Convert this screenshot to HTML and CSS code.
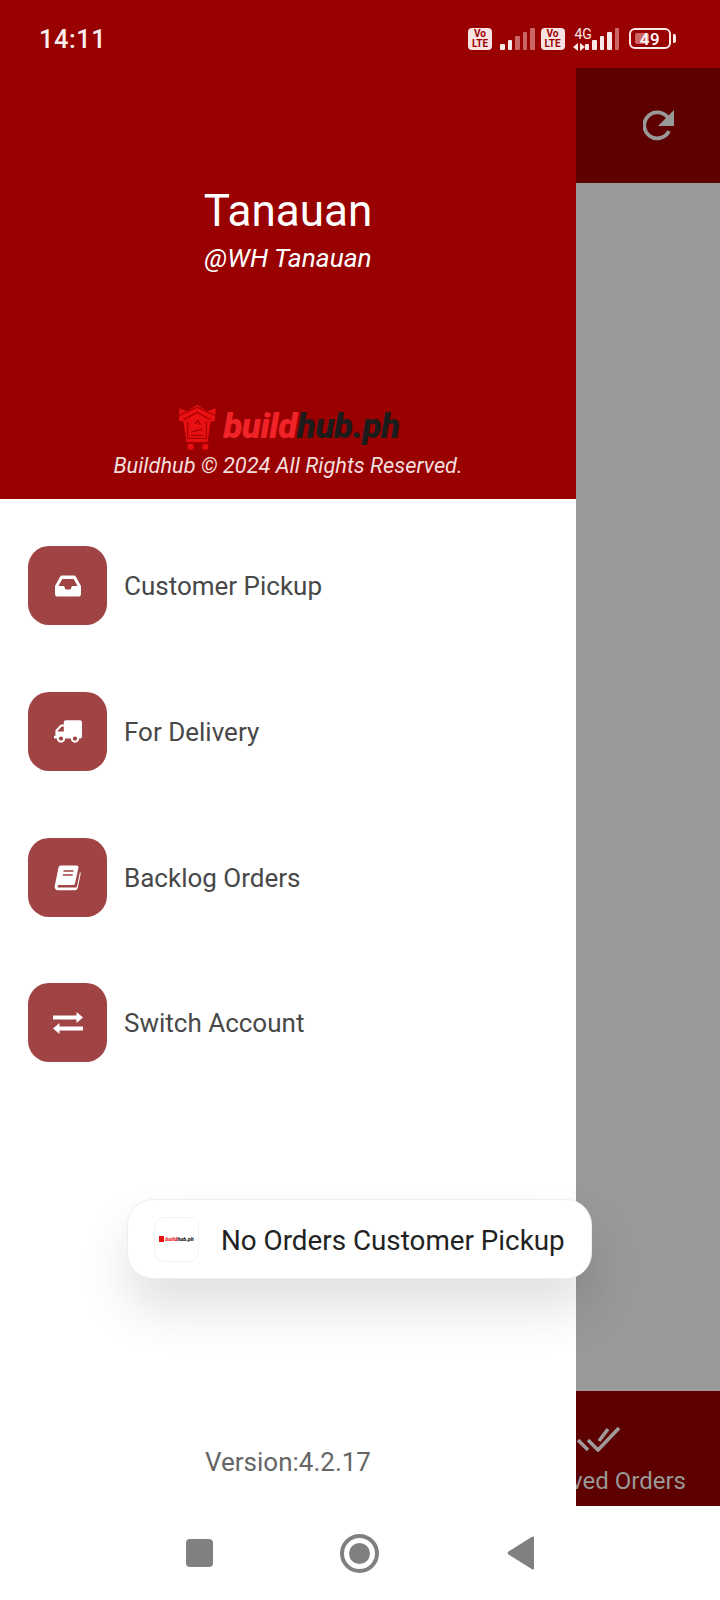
FILE: index.html
```html
<!DOCTYPE html>
<html lang="en">
<head>
    <meta charset="UTF-8">
    <meta name="viewport" content="width=device-width, initial-scale=1.0">
    <title>Buildhub</title>
    <link rel="stylesheet" href="styles.css">
</head>
<body>
<div class="screen">

    <div class="status-bar">
        <span class="clock">14:11</span>
        <div class="status-icons">
            <span class="volte">Vo<br>LTE</span>
            <span class="bars">
                <i class="b1"></i><i class="b2"></i><i class="b3 dim"></i><i class="b4 dim"></i><i class="b5 dim"></i>
            </span>
            <span class="volte second">Vo<br>LTE</span>
            <span class="net">
                <span class="net-label">4G</span>
                <svg class="net-arrows" width="12" height="8" viewBox="0 0 12 8"><path d="M5 0v8L0 4zM7 0l5 4-5 4z" fill="#fbe9e9"/></svg>
            </span>
            <span class="bars">
                <i class="b1"></i><i class="b2"></i><i class="b3"></i><i class="b4"></i><i class="b5 dim"></i>
            </span>
            <span class="battery"><span class="battery-fill"></span><span class="battery-num">49</span></span>
            <span class="battery-nub"></span>
        </div>
    </div>

    <div class="main">
        <div class="drawer">
            <div class="drawer-head">
                <div class="store-name">Tanauan</div>
                <div class="store-handle">@WH Tanauan</div>
                <div class="brand">
                    <svg class="brand-cart" width="42" height="48" viewBox="0 0 40 46">
                        <path d="M3 4l7 3L20 1l10 6 8-3-1 12-4 1-3 20H10L7 17l-4-1z" fill="#e81010"/>
                        <path d="M3 11L20 3l17 8M7 15L20 8l13 7M11 17v16h18V17" fill="none" stroke="#a80000" stroke-width="1.200"/>
                        <path d="M14 27l11-3M14 30h12M18 19l3-3 2 4M9 37h23" fill="none" stroke="#a80000" stroke-width="1.300"/>
                        <circle cx="14" cy="41" r="3.400" fill="#e81010" stroke="#a80000"/>
                        <circle cx="28" cy="41" r="3.400" fill="#e81010" stroke="#a80000"/>
                    </svg>
                    <span class="brand-name"><span class="brand-red">build</span>hub.ph</span>
                </div>
                <div class="copyright">Buildhub © 2024 All Rights Reserved.</div>
            </div>

            <div class="menu">
                <div class="menu-item">
                    <span class="menu-icon">
                        <svg width="26" height="28" viewBox="0 0 576 512" preserveAspectRatio="none"><path d="M567.938 243.908L462.25 85.374A48.003 48.003 0 0 0 422.311 64H153.689a48 48 0 0 0-39.938 21.374L8.062 243.908A47.994 47.994 0 0 0 0 270.533V400c0 26.51 21.49 48 48 48h480c26.51 0 48-21.49 48-48V270.533a47.994 47.994 0 0 0-8.062-26.625zM162.252 128h251.497l85.333 128H376l-32 64H232l-32-64H76.918l85.334-128z" fill="#fff"/></svg>
                    </span>
                    <span>Customer Pickup</span>
                </div>
                <div class="menu-item">
                    <span class="menu-icon">
                        <svg class="flip" width="28" height="23" viewBox="0 0 640 512"><path d="M624 352h-16V243.900c0-12.700-5.100-24.900-14.100-33.900L494 110.100c-9-9-21.200-14.100-33.900-14.100H416V48c0-26.500-21.500-48-48-48H48C21.500 0 0 21.500 0 48v320c0 26.500 21.500 48 48 48h16c0 53 43 96 96 96s96-43 96-96h128c0 53 43 96 96 96s96-43 96-96h48c8.800 0 16-7.200 16-16v-32c0-8.800-7.200-16-16-16zM160 464c-26.500 0-48-21.500-48-48s21.500-48 48-48 48 21.500 48 48-21.500 48-48 48zm320 0c-26.500 0-48-21.500-48-48s21.500-48 48-48 48 21.500 48 48-21.500 48-48 48zm80-208H416V144h44.100l99.900 99.900V256z" fill="#fff"/></svg>
                    </span>
                    <span>For Delivery</span>
                </div>
                <div class="menu-item">
                    <span class="menu-icon">
                        <svg width="28" height="26" viewBox="0 0 28 26">
                            <path d="M7 .5h15.500c1.500 0 2.200 1 1.900 2.400L21 18.500c-.3 1-1 1.500-2 1.500H5c-1.800 0-1.800 2.600 0 2.600h16.500c.8 0 1.200-.4 1.400-1.100L26 7c.5.4.8 1 .7 1.700l-3 14.400c-.3 1.300-1.200 2.200-2.600 2.200H4.200C1.800 25.300.2 23.200.8 20.800L4.500 2.600C4.800 1.300 5.700.5 7 .5z" fill="#fff"/>
                            <path d="M9.500 6h10M8.700 10h10" stroke="#a04344" stroke-width="1.600"/>
                        </svg>
                    </span>
                    <span>Backlog Orders</span>
                </div>
                <div class="menu-item last">
                    <span class="menu-icon">
                        <svg width="30" height="22" viewBox="0 0 30 22"><path d="M0 3.500h23.500V0L30 5.500 23.500 11V7.500H0zM30 14.500H6.500V11L0 16.500 6.500 22v-3.500H30z" fill="#fff"/></svg>
                    </span>
                    <span>Switch Account</span>
                </div>
            </div>

            <div class="version">Version:4.2.17</div>
        </div>

        <div class="side">
            <div class="side-top">
                <svg width="32" height="31" viewBox="0 0 32 31"><path d="M26 21a13 13 0 1 1 -1 -13" fill="none" stroke="#999" stroke-width="3.800"/><path d="M31 0v16H15z" fill="#999"/></svg>
            </div>
            <div class="side-scrim"></div>
            <div class="side-tab">
                <div class="tab-item">
                    <svg width="44" height="26" viewBox="0 0 44 26"><path d="M1 14l10 10M11 14l10 10L42 2M22 15l9-12" fill="none" stroke="#a09a9a" stroke-width="3.600"/></svg>
                    <span>Received Orders</span>
                </div>
            </div>
        </div>
    </div>

    <div class="nav-bar">
        <span class="nav-square"></span>
        <span class="nav-home"><span class="nav-dot"></span></span>
        <svg class="nav-back" width="28" height="34" viewBox="0 0 28 34"><path d="M27 1.500v31q0 1.500-2 .8L1.500 18.500q-1.800-1.500 0-3L25 .7q2-.7 2 .8z" fill="#808080"/></svg>
    </div>

    <div class="toast">
        <span class="toast-logo"><span class="toast-mark"></span><span class="toast-brand"><span class="brand-red">build</span>hub.ph</span></span>
        <span class="toast-text">No Orders Customer Pickup</span>
    </div>

</div>
</body>
</html>
```

FILE: styles.css
```css
body {
    margin: 0;
    font-family: Roboto, "Liberation Sans", sans-serif;
    background-color: #fff;
}
.screen {
    position: relative;
    display: flex;
    flex-direction: column;
    width: 720px;
    height: 1600px;
    overflow: hidden;
}

/* status bar */
.status-bar {
    display: flex;
    align-items: center;
    justify-content: space-between;
    flex: none;
    height: 68px;
    padding: 10px 44px 0 39px;
    background-color: #990000;
    color: #fff;
    box-sizing: border-box;
}
.clock {
    font-size: 25.500px;
    font-weight: 500;
    letter-spacing: 0.5px;
    color: #fbeeee;
}
.status-icons {
    display: flex;
    align-items: center;
    height: 30px;
    margin-top: -1px;
}
.volte {
    width: 24px;
    height: 22px;
    border-radius: 4px;
    background-color: #f9e2e2;
    color: #990000;
    font-size: 10px;
    font-weight: 700;
    line-height: 10px;
    text-align: center;
    padding-top: 1px;
    box-sizing: border-box;
}
.volte.second {
    margin-left: 6px;
}
.bars {
    display: flex;
    align-items: flex-end;
    gap: 3px;
    height: 22px;
    margin-left: 8px;
}
.bars i {
    width: 4.500px;
    background-color: #fbe9e9;
    border-radius: 1px;
}
.bars i.dim {
    background-color: #cc6666;
}
.b1 { height: 6px; }
.b2 { height: 10px; }
.b3 { height: 14px; }
.b4 { height: 18px; }
.b5 { height: 22px; }
.net {
    display: flex;
    flex-direction: column;
    align-items: flex-start;
    width: 20px;
    margin-left: 8px;
    margin-right: -16px;
    color: #fbe9e9;
}
.net-label {
    font-size: 14px;
    line-height: 14px;
    margin-left: 2px;
}
.net-arrows {
    margin-top: 2px;
}
.battery {
    position: relative;
    display: flex;
    align-items: center;
    justify-content: center;
    width: 42px;
    height: 21px;
    margin-left: 10px;
    border: 2px solid #fbe9e9;
    border-radius: 6px;
    box-sizing: border-box;
}
.battery-fill {
    position: absolute;
    left: 4px;
    top: 3px;
    bottom: 3px;
    width: 14px;
    border-radius: 2px;
    background-color: #cc6666;
}
.battery-num {
    position: relative;
    font-size: 17px;
    font-weight: 500;
    letter-spacing: 0.5px;
    color: #fff;
}
.battery-nub {
    width: 3px;
    height: 9px;
    margin-left: 2px;
    border-radius: 0 2px 2px 0;
    background-color: #fbe9e9;
}

/* layout under the status bar */
.main {
    display: flex;
    flex: 1;
    min-height: 0;
}
.drawer {
    display: flex;
    flex-direction: column;
    flex: none;
    width: 576px;
    background-color: #fff;
}
.drawer-head {
    display: flex;
    flex-direction: column;
    align-items: center;
    flex: none;
    height: 431px;
    padding-top: 117px;
    background-color: #990000;
    color: #fff;
    box-sizing: border-box;
}
.store-name {
    font-size: 44px;
    line-height: 52px;
}
.store-handle {
    font-size: 26.300px;
    font-style: italic;
    line-height: 32px;
    margin-top: 5px;
}
.brand {
    display: flex;
    align-items: center;
    margin-top: 130px;
    height: 48px;
}
.brand-cart {
    margin-right: 5px;
}
.brand-name {
    padding-bottom: 3px;
    font-size: 35px;
    font-weight: 900;
    font-style: italic;
    color: #1c1c1c;
    letter-spacing: -0.5px;
}
.brand-red {
    color: #f02428;
}
.copyright {
    font-size: 21.800px;
    font-style: italic;
    line-height: 26px;
    margin-top: 1px;
    color: #f3dede;
}

.menu {
    display: flex;
    flex-direction: column;
    gap: 67px;
    padding: 47px 28px 0;
}
.menu-item {
    display: flex;
    align-items: center;
    gap: 17px;
    font-size: 26px;
    color: #484848;
}
.menu-item.last {
    margin-top: -1px;
}
.menu-icon {
    display: flex;
    align-items: center;
    justify-content: center;
    width: 79px;
    height: 79px;
    border-radius: 21px;
    background-color: #a04344;
}
.flip {
    transform: scaleX(-1);
}
.version {
    margin-top: auto;
    padding-bottom: 29px;
    text-align: center;
    font-size: 26px;
    color: #666;
}

/* dimmed page behind the drawer */
.side {
    display: flex;
    flex-direction: column;
    flex: 1;
    min-width: 0;
}
.side-top {
    display: flex;
    align-items: center;
    justify-content: flex-end;
    flex: none;
    height: 115px;
    padding-right: 45px;
    background-color: #5c0000;
    box-sizing: border-box;
}
.side-scrim {
    flex: 1;
    background-color: #999;
}
.side-tab {
    display: flex;
    justify-content: flex-end;
    flex: none;
    height: 115px;
    padding-right: 34px;
    background-color: #5c0000;
    color: #999;
    box-sizing: border-box;
    overflow: hidden;
}
.tab-item {
    display: flex;
    flex-direction: column;
    align-items: center;
    flex: none;
    padding-top: 35px;
    font-size: 24px;
    white-space: nowrap;
}
.tab-item span {
    margin-top: 15px;
}

/* navigation bar */
.nav-bar {
    display: flex;
    align-items: center;
    justify-content: center;
    flex: none;
    height: 94px;
    background-color: #fff;
}
.nav-square {
    width: 27px;
    height: 28px;
    border-radius: 4px;
    background-color: #808080;
}
.nav-home {
    display: flex;
    align-items: center;
    justify-content: center;
    width: 39px;
    height: 39px;
    margin: 0 128px 0 127px;
    border: 4px solid #808080;
    border-radius: 50%;
    box-sizing: border-box;
}
.nav-dot {
    width: 21px;
    height: 21px;
    border-radius: 50%;
    background-color: #808080;
}

/* toast sits over the drawer */
.toast {
    position: absolute;
    left: 127px;
    top: 1199px;
    display: flex;
    align-items: center;
    gap: 22px;
    width: 465px;
    height: 80px;
    padding-left: 26px;
    border: 1px solid #eee;
    border-radius: 26px;
    background-color: #fff;
    box-shadow: 0 30px 50px rgba(0, 0, 0, 0.12);
    box-sizing: border-box;
    font-size: 27.800px;
    color: #222;
    white-space: nowrap;
}
.toast-text {
    padding-top: 3px;
}
.toast-logo {
    display: flex;
    align-items: center;
    justify-content: center;
    flex: none;
    gap: 1px;
    width: 45px;
    height: 45px;
    border: 1px solid #f2f2f2;
    border-radius: 10px;
    box-sizing: border-box;
}
.toast-mark {
    width: 5px;
    height: 6px;
    background-color: #e81010;
}
.toast-brand {
    font-size: 5.500px;
    font-weight: 900;
    font-style: italic;
    color: #1c1c1c;
}
```
